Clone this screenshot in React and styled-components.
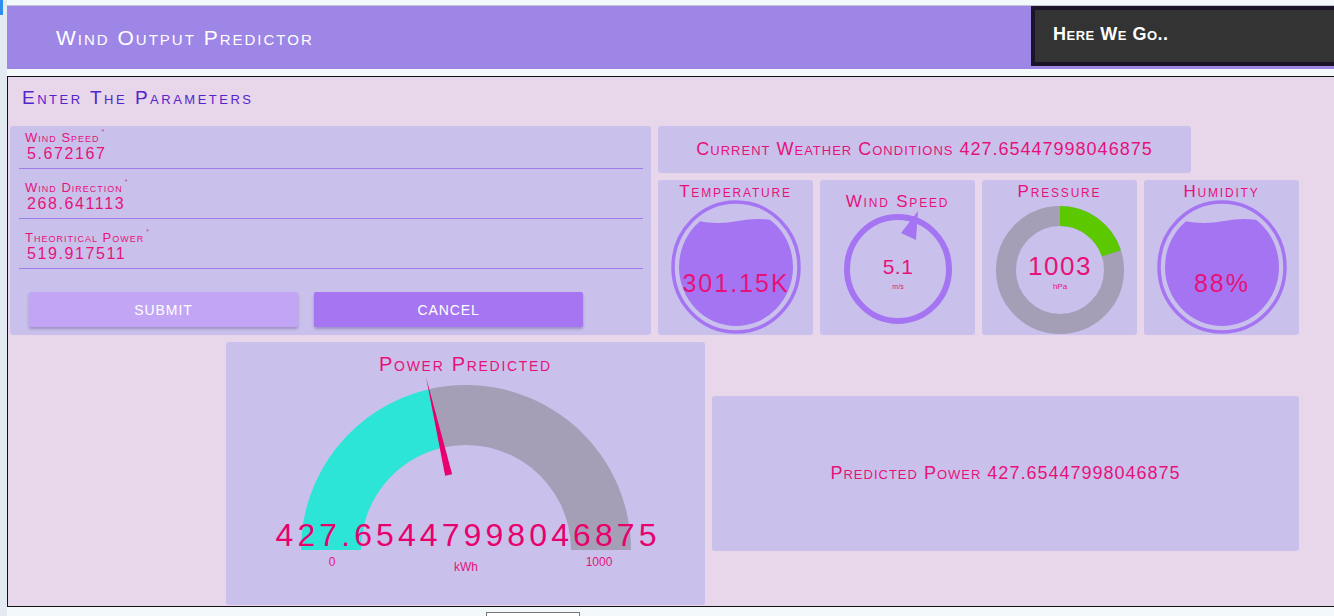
import styled, { createGlobalStyle } from 'styled-components'

const FONT = "'Liberation Sans', Arial, sans-serif"
const PINK = '#e6127a'
const LILAC = '#c9c1ec'
const PURPLE = '#a574f2'

const GlobalStyle = createGlobalStyle`
  html, body {
    margin: 0;
    padding: 0;
  }
  body {
    background: #f3f8fb;
    font-family: ${FONT};
    overflow: hidden;
  }
`

const Page = styled.div`
  display: flex;
  width: 1334px;
  height: 616px;
  overflow: hidden;
`

const Gutter = styled.div`
  width: 7px;
  flex-shrink: 0;
  background: #e3eaf2;
`

const Marker = styled.div`
  width: 3px;
  height: 15px;
  background: #2f8df0;
`

const Main = styled.div`
  flex: 1;
  min-width: 0;
  padding-top: 5px;
`

const Header = styled.header`
  height: 63px;
  border-top: 1px solid #c4c3d3;
  background: #9e86e6;
  display: flex;
  justify-content: space-between;
  align-items: flex-start;
`

const Brand = styled.h1`
  margin: 0;
  padding-left: 49px;
  line-height: 63px;
  font-size: 21px;
  font-weight: 400;
  font-variant: small-caps;
  letter-spacing: 2px;
  color: #fff;
`

const HereBox = styled.div`
  width: 303px;
  height: 60px;
  background: #333;
  border: 4px solid #1b1428;
  border-right: none;
  display: flex;
  align-items: center;
  padding-left: 18px;
  padding-bottom: 4px;
  box-sizing: border-box;
  color: #fff;
  font-size: 18px;
  font-weight: 700;
  font-variant: small-caps;
  letter-spacing: 0.5px;
`

const Board = styled.section`
  margin-top: 7px;
  height: 529px;
  border: 1px solid #111;
  border-right: none;
  background: #e8d6ea;
  padding-left: 2px;
`

const BoardTitle = styled.h2`
  margin: 10px 0 17px 12px;
  line-height: 22px;
  font-size: 19px;
  font-weight: 400;
  font-variant: small-caps;
  letter-spacing: 2.5px;
  color: #5425c9;
`

const TopRow = styled.div`
  display: flex;
  gap: 7px;
  height: 209px;
`

const Card = styled.div`
  background: ${LILAC};
  border-radius: 3px;
`

const FormCard = styled(Card)`
  width: 641px;
  padding: 1px 8px 0 9px;
  box-sizing: border-box;
`

const Field = styled.div`
  padding-top: 5px;
  margin-top: ${({ $first }) => ($first ? 0 : 8)}px;
  border-bottom: 1px solid #a07ee8;
`

const Label = styled.div`
  padding-left: 6px;
  height: 12px;
  line-height: 12px;
  font-size: 13px;
  font-variant: small-caps;
  letter-spacing: 1px;
  color: ${PINK};

  sup {
    font-size: 7px;
    line-height: 0;
    vertical-align: top;
    color: #b04a8a;
    margin-left: 2px;
  }
`

const Value = styled.div`
  padding-left: 8px;
  line-height: 20px;
  padding-bottom: 4px;
  font-size: 16px;
  letter-spacing: 1.6px;
  color: ${PINK};
`

const Buttons = styled.div`
  display: flex;
  gap: 16px;
  margin-top: 23px;
  padding-left: 10px;
`

const Button = styled.button`
  width: 269px;
  height: 35px;
  border: none;
  border-radius: 2px;
  background: ${({ $primary }) => ($primary ? '#a575f2' : '#c2a6f5')};
  box-shadow: 0 2px 3px rgba(60, 30, 110, 0.3);
  color: #fff;
  font-family: ${FONT};
  font-size: 14px;
  letter-spacing: 0.9px;
`

const Side = styled.div`
  display: flex;
  flex-direction: column;
  gap: 7px;
`

const WeatherHead = styled(Card)`
  width: 533px;
  height: 47px;
  display: flex;
  align-items: center;
  justify-content: center;
`

const Headline = styled.div`
  font-size: 18px;
  font-variant: small-caps;
  letter-spacing: 1px;
  color: ${PINK};

  b {
    font-weight: 400;
    font-size: 18px;
    letter-spacing: 1px;
  }
`

const GaugeRow = styled.div`
  display: flex;
  gap: 7px;
`

const GaugeCard = styled(Card)`
  width: 155px;
  height: 155px;
  display: flex;
  flex-direction: column;
  align-items: center;
`

const GaugeTitle = styled.div`
  margin-top: ${({ $drop }) => $drop || 0}px;
  line-height: 24px;
  font-size: 17px;
  font-variant: small-caps;
  letter-spacing: 1.8px;
  color: ${PINK};
`

const Svg = styled.svg`
  display: block;
  overflow: visible;
`

const BottomRow = styled.div`
  display: flex;
  align-items: center;
  gap: 7px;
  margin-top: 7px;
  padding-left: 216px;
  height: 263px;
`

const PowerCard = styled(Card)`
  width: 479px;
  height: 263px;
  display: flex;
  flex-direction: column;
  align-items: center;
`

const PowerTitle = styled.div`
  line-height: 44px;
  font-size: 20px;
  font-variant: small-caps;
  letter-spacing: 1.7px;
  color: ${PINK};
`

const ResultCard = styled(Card)`
  width: 587px;
  height: 155px;
  display: flex;
  align-items: center;
  justify-content: center;
`

const Footer = styled.div`
  padding: 5px 0 0 479px;
`

const Stub = styled.div`
  width: 92px;
  height: 10px;
  border: 1px solid #777;
  background: #fff;
`

const fields = [
  ['Wind Speed', '5.672167'],
  ['Wind Direction', '268.641113'],
  ['Theoritical Power', '519.917511'],
]

function LiquidGauge({ id, text }) {
  return (
    <Svg width="155" height="131" viewBox="0 0 155 131">
      <defs>
        <clipPath id={id}>
          <ellipse cx="78" cy="63" rx="57" ry="59" />
        </clipPath>
      </defs>
      <ellipse cx="78" cy="63" rx="63" ry="65" fill="none" stroke={PURPLE} strokeWidth="3.5" />
      <path
        clipPath={`url(#${id})`}
        d="M0 16 Q 20 13 40 17 T 80 17 T 120 17 T 160 16 L 160 140 L 0 140 Z"
        fill={PURPLE}
      />
      <text x="78" y="88" textAnchor="middle" fontFamily={FONT} fontSize="25" letterSpacing="2" fill={PINK}>
        {text}
      </text>
    </Svg>
  )
}

function WindGauge() {
  return (
    <Svg width="155" height="121" viewBox="0 0 155 121">
      <ellipse cx="78" cy="55" rx="51" ry="52" fill="none" stroke={PURPLE} strokeWidth="6" />
      <polygon points="98,-3 81,19 96,26" fill={PURPLE} />
      <text x="78" y="60" textAnchor="middle" fontFamily={FONT} fontSize="21" letterSpacing="0.5" fill={PINK}>5.1</text>
      <text x="78" y="75" textAnchor="middle" fontFamily={FONT} fontSize="7" fill={PINK}>m/s</text>
    </Svg>
  )
}

function polar(cx, cy, r, deg) {
  const a = (deg * Math.PI) / 180
  return [cx + r * Math.cos(a), cy - r * Math.sin(a)]
}

function PressureGauge() {
  const [x1, y1] = polar(78, 66, 54, 90)
  const [x2, y2] = polar(78, 66, 54, 18)
  return (
    <Svg width="155" height="131" viewBox="0 0 155 131">
      <circle cx="78" cy="66" r="54" fill="none" stroke="#a49fb6" strokeWidth="20" />
      <path d={`M${x1} ${y1} A54 54 0 0 1 ${x2} ${y2}`} fill="none" stroke="#5cc800" strokeWidth="20" />
      <text x="78" y="71" textAnchor="middle" fontFamily={FONT} fontSize="26" letterSpacing="1.5" fill={PINK}>1003</text>
      <text x="78" y="85" textAnchor="middle" fontFamily={FONT} fontSize="8" fill={PINK}>hPa</text>
    </Svg>
  )
}

function band(cx, cy, R, r, a1, a2) {
  const [ox1, oy1] = polar(cx, cy, R, a1)
  const [ox2, oy2] = polar(cx, cy, R, a2)
  const [ix2, iy2] = polar(cx, cy, r, a2)
  const [ix1, iy1] = polar(cx, cy, r, a1)
  return `M${ox1} ${oy1} A${R} ${R} 0 0 1 ${ox2} ${oy2} L${ix2} ${iy2} A${r} ${r} 0 0 0 ${ix1} ${iy1} Z`
}

function PowerGauge({ value }) {
  const cx = 240
  const cy = 164
  const angle = 180 - (value / 1000) * 180
  const a = (angle * Math.PI) / 180
  const [tx, ty] = polar(cx, cy, 177, angle)
  const [bx, by] = polar(cx, cy, 77, angle)
  const px = 3.6 * Math.sin(a)
  const py = 3.6 * Math.cos(a)
  return (
    <Svg width="479" height="219" viewBox="0 0 479 219">
      <path d={band(cx, cy, 165, 105, 180, angle)} fill="#2ce5d6" />
      <path d={band(cx, cy, 165, 105, angle, 0)} fill="#a49fb6" />
      <polygon points={`${tx},${ty} ${bx + px},${by + py} ${bx - px},${by - py}`} fill="#e8006e" />
      <text x={cx} y="160" textAnchor="middle" fontFamily={FONT} fontSize="32" textLength="381" lengthAdjust="spacing" fill="#e8006e">
        {String(value)}
      </text>
      <text x="106" y="180" textAnchor="middle" fontFamily={FONT} fontSize="12" fill={PINK}>0</text>
      <text x={cx} y="185" textAnchor="middle" fontFamily={FONT} fontSize="12" fill={PINK}>kWh</text>
      <text x="373" y="180" textAnchor="middle" fontFamily={FONT} fontSize="12" fill={PINK}>1000</text>
    </Svg>
  )
}

const App = () => (
  <Page>
    <GlobalStyle />
    <Gutter>
      <Marker />
    </Gutter>
    <Main>
      <Header>
        <Brand>Wind Output Predictor</Brand>
        <HereBox>Here We Go..</HereBox>
      </Header>

      <Board>
        <BoardTitle>Enter The Parameters</BoardTitle>

        <TopRow>
          <FormCard>
            {fields.map(([label, value], i) => (
              <Field key={label} $first={i === 0}>
                <Label>{label}<sup>*</sup></Label>
                <Value>{value}</Value>
              </Field>
            ))}
            <Buttons>
              <Button>SUBMIT</Button>
              <Button $primary>CANCEL</Button>
            </Buttons>
          </FormCard>

          <Side>
            <WeatherHead>
              <Headline>Current Weather Conditions <b>427.65447998046875</b></Headline>
            </WeatherHead>
            <GaugeRow>
              <GaugeCard>
                <GaugeTitle>Temperature</GaugeTitle>
                <LiquidGauge id="temp" text="301.15K" />
              </GaugeCard>
              <GaugeCard>
                <GaugeTitle $drop={10}>Wind Speed</GaugeTitle>
                <WindGauge />
              </GaugeCard>
              <GaugeCard>
                <GaugeTitle>Pressure</GaugeTitle>
                <PressureGauge />
              </GaugeCard>
              <GaugeCard>
                <GaugeTitle>Humidity</GaugeTitle>
                <LiquidGauge id="hum" text="88%" />
              </GaugeCard>
            </GaugeRow>
          </Side>
        </TopRow>

        <BottomRow>
          <PowerCard>
            <PowerTitle>Power Predicted</PowerTitle>
            <PowerGauge value={427.65447998046875} />
          </PowerCard>
          <ResultCard>
            <Headline>Predicted Power <b>427.65447998046875</b></Headline>
          </ResultCard>
        </BottomRow>
      </Board>

      <Footer>
        <Stub />
      </Footer>
    </Main>
  </Page>
)

export default App
